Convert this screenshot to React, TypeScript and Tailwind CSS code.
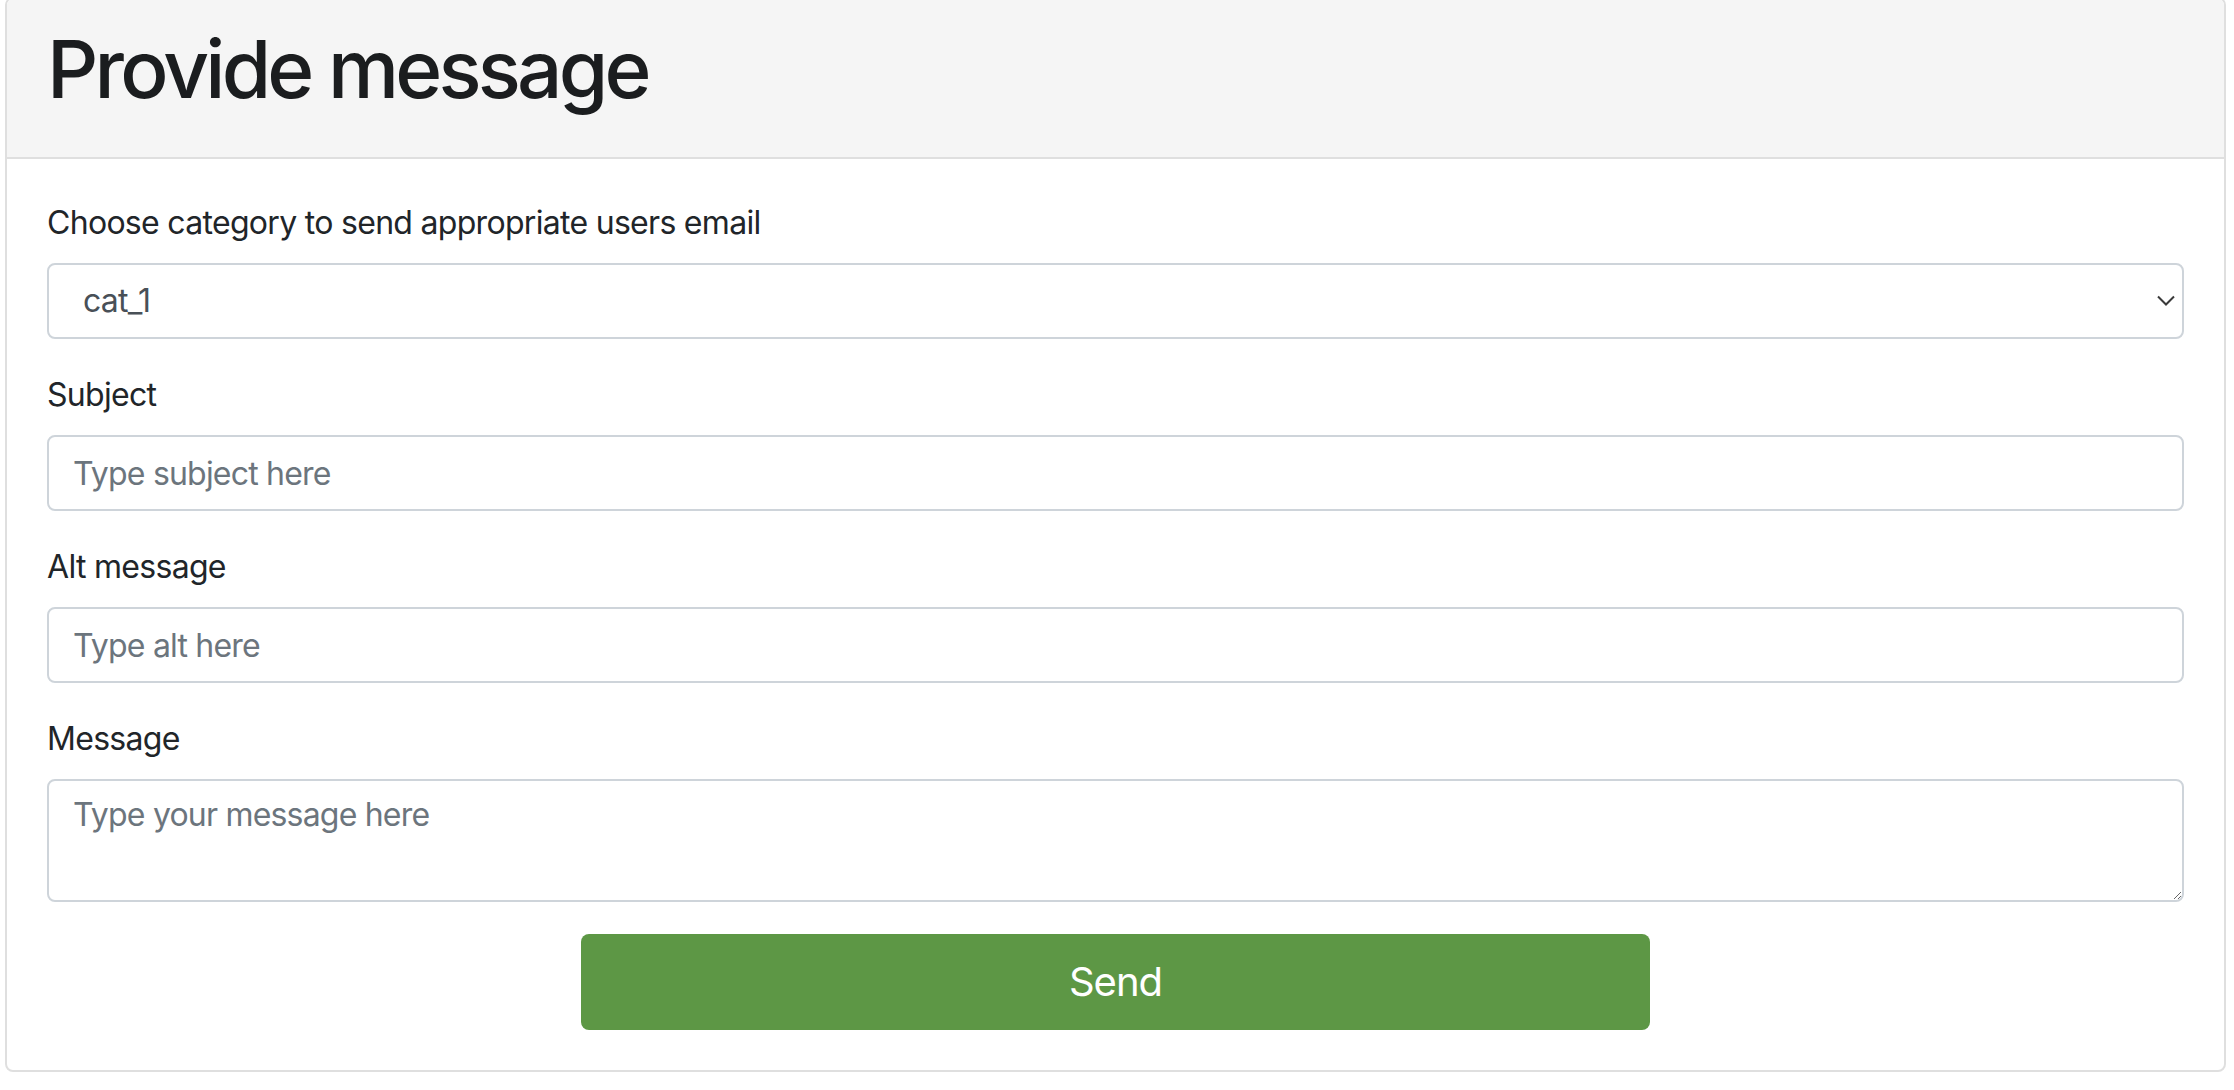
import { useState } from 'react';

const CATEGORIES = ['cat_1', 'cat_2', 'cat_3'];

const inputCls =
  'block h-[76px] w-full rounded-[8px] border-2 border-[#ced4da] bg-white px-[24px] text-[32px] leading-[48px] tracking-[-0.8px] text-[#495057] placeholder:text-[#6c757d] outline-none';

export default function App() {
  const [category, setCategory] = useState(CATEGORIES[0]);

  return (
    <div
      className="min-h-[1090px] bg-white text-[#212529]"
      style={{ fontFamily: 'Inter, "Noto Sans", sans-serif' }}
    >
      <div className="ml-[5px] mt-[-3px] w-[2221px] overflow-hidden rounded-[8px] border-2 border-[#dfdfdf] bg-white">
        <div className="border-b-2 border-[#dfdfdf] bg-[#f5f5f5] px-[40px] pb-[24px] pt-[22px]">
          <h1 className="mb-[16px] text-[80px] font-medium leading-[96px] tracking-[-3.8px] text-[#1b1d1f]">
            Provide message
          </h1>
        </div>

        <form className="px-[40px] py-[40px]" onSubmit={(e) => e.preventDefault()}>
          <Field label="Choose category to send appropriate users email">
            <div className="relative">
              <select
                value={category}
                onChange={(e) => setCategory(e.target.value)}
                className={`${inputCls} appearance-none pl-[34px] text-[#212529]`}
              >
                {CATEGORIES.map((c) => (
                  <option key={c}>{c}</option>
                ))}
              </select>
              <svg
                className="pointer-events-none absolute right-[9px] top-[32px]"
                width="18"
                height="11"
                viewBox="0 0 18 11"
                fill="none"
              >
                <path d="M1 1.5 L9 9.5 L17 1.5" stroke="#3a3a3a" strokeWidth="2" />
              </svg>
            </div>
          </Field>

          <Field label="Subject">
            <input type="text" placeholder="Type subject here" className={inputCls} />
          </Field>

          <Field label="Alt message">
            <input type="text" placeholder="Type alt here" className={inputCls} />
          </Field>

          <Field label="Message">
            <textarea
              placeholder="Type your message here"
              rows={2}
              className="block h-[123px] w-full resize-y rounded-[8px] border-2 border-[#ced4da] bg-white px-[24px] py-[10px] text-[32px] leading-[48px] tracking-[-0.8px] text-[#495057] placeholder:text-[#6c757d] outline-none"
            />
          </Field>

          <button
            type="submit"
            className="mx-auto block h-[96px] w-1/2 rounded-[8px] bg-[#5d9745] text-[40px] leading-[60px] tracking-[-1px] text-white"
          >
            Send
          </button>
        </form>
      </div>
    </div>
  );
}

function Field({ label, children }: { label: string; children: React.ReactNode }) {
  return (
    <div className="mb-[32px]">
      <label className="mb-[16px] block text-[32px] leading-[48px] tracking-[-0.7px]">{label}</label>
      {children}
    </div>
  );
}
